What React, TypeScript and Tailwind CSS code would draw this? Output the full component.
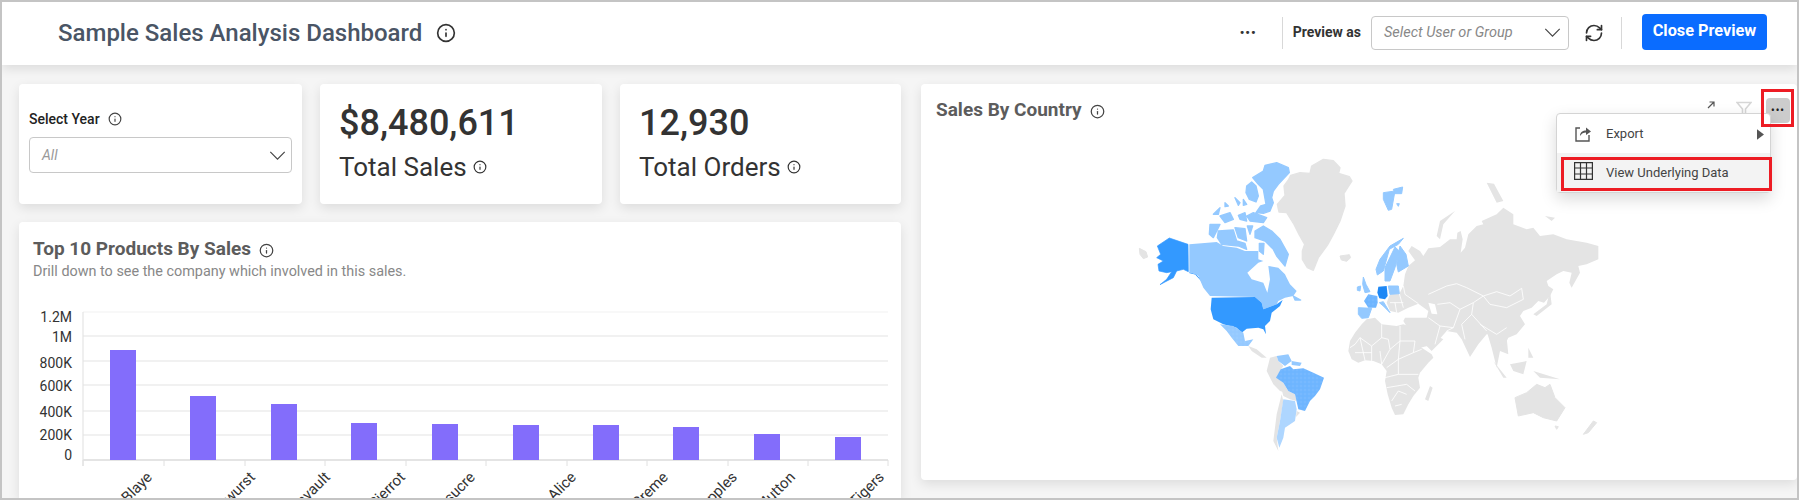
import { Info, RefreshCw } from "lucide-react";

const GRAY = "#e4e4e4";
const LIGHT = "#94c9ff";
const MID = "#6db4ff";
const BLUE = "#3399ff";

const GRID = [
  { y: 312, label: "1.2M", ly: 317 },
  { y: 336, label: "1M", ly: 337 },
  { y: 361, label: "800K", ly: 363 },
  { y: 385, label: "600K", ly: 386 },
  { y: 411, label: "400K", ly: 412 },
  { y: 435, label: "200K", ly: 435 },
  { y: 460, label: "0", ly: 455 },
];

const TICKS = [83, 164, 245, 325, 406, 486, 567, 647, 728, 808, 888];

const BARS = [
  { x: 110, top: 350, label: "Côte de Blaye", ex: 153, ey: 478 },
  { x: 190, top: 396, label: "Thüringer Rostbratwurst", ex: 256, ey: 478 },
  { x: 271, top: 404, label: "Raclette Courdavault", ex: 331, ey: 478 },
  { x: 351, top: 423, label: "Camembert Pierrot", ex: 406, ey: 478 },
  { x: 432, top: 424, label: "Tarte au sucre", ex: 476, ey: 478 },
  { x: 513, top: 425, label: "Gnocchi di nonna Alice", ex: 577, ey: 478 },
  { x: 593, top: 425, label: "Vanilla Creme", ex: 669, ey: 478 },
  { x: 673, top: 427, label: "Manjimup Dried Apples", ex: 738, ey: 478 },
  { x: 754, top: 434, label: "Alice Mutton", ex: 796, ey: 478 },
  { x: 835, top: 437, label: "Carnarvon Tigers", ex: 885, ey: 478 },
];

function Chevron({ className }: { className?: string }) {
  return (
    <svg viewBox="0 0 18 10" className={className} fill="none" stroke="#444" strokeWidth="1.3">
      <path d="M1 1 L9 9 L17 1" />
    </svg>
  );
}

function TopProductsChart() {
  return (
    <svg viewBox="19 290 882 210" width={882} height={210} className="block mt-[8px]">
      {GRID.map((g) => (
        <line key={g.y} x1={83} x2={888} y1={g.y} y2={g.y} stroke={g.y === 312 ? "#f2f2f2" : "#e4e4e4"} strokeWidth={g.y === 460 ? 2 : 1.2} />
      ))}
      {GRID.map((g) => (
        <text key={g.label} x={72} y={g.ly + 5} textAnchor="end" fontSize={14} fill="#333">
          {g.label}
        </text>
      ))}
      <line x1={83} x2={83} y1={312} y2={466} stroke="#e4e4e4" strokeWidth={1.2} />
      {TICKS.map((x) => (
        <line key={x} x1={x} x2={x} y1={460} y2={466} stroke="#e0e0e0" strokeWidth={1} />
      ))}
      {BARS.map((b) => (
        <rect key={b.x} x={b.x} y={b.top} width={26} height={460 - b.top} fill="#836dfb" />
      ))}
      {BARS.map((b) => (
        <text key={b.label} textAnchor="end" fontSize={15} fill="#333" transform={`translate(${b.ex} ${b.ey}) rotate(-45)`}>
          {b.label}
        </text>
      ))}
    </svg>
  );
}

function WorldMap() {
  return (
    <svg viewBox="1130 155 480 330" width={480} height={330} className="block" strokeLinejoin="round">
      <defs>
        <pattern id="dots" width="4" height="4" patternUnits="userSpaceOnUse">
          <circle cx="1" cy="1" r="0.45" fill="#cfe6ff" />
        </pattern>
      </defs>
      {/* north america, traced at 3x from (1130,155) */}
      <g transform="translate(1130 155) scale(0.33333)">
        <path fill={GRAY} stroke={GRAY} strokeWidth="4" d="M482,58 L510,50 L540,52 L545,30 L580,10 L610,14 L630,35 L626,52 L658,62 L666,75 L642,112 L645,150 L630,195 L610,235 L592,268 L565,305 L550,343 L532,335 L517,310 L517,285 L524,265 L507,235 L492,205 L470,170 L447,168 L442,145 L465,118 L462,90 L475,72 Z" />
        <path fill={GRAY} stroke={GRAY} strokeWidth="3" d="M630,300 L658,296 L662,305 L650,316 L634,312 Z M28,277 L48,287 L53,303 L40,308 L30,295 Z" />
        <path fill={BLUE} stroke={BLUE} strokeWidth="2" d="M118,246 L174,265 L175,347 L160,340 L140,345 L130,365 L105,378 L90,386 L110,370 L125,347 L110,350 L87,345 L84,325 L100,315 L80,305 L92,295 L82,270 Z" />
        <path fill="none" stroke={BLUE} strokeWidth="3" d="M178,350 L195,354 L215,375 L225,395" />
        <path fill={LIGHT} d="M178,265 L215,262 L260,258 L280,270 L320,275 L345,285 L385,285 L385,310 L400,315 L385,320 L352,350 L365,370 L400,380 L412,410 L420,370 L415,330 L445,335 L465,355 L470,365 L480,385 L500,405 L490,420 L465,425 L445,435 L440,445 L400,460 L395,440 L375,423 L240,420 L220,395 L205,360 L178,348 Z" />
        <path fill={LIGHT} stroke={LIGHT} strokeWidth="4" d="M490,420 L512,432 L495,432 Z M368,65 L400,45 L405,28 L440,20 L475,35 L478,50 L445,85 L430,105 L425,125 L430,140 L420,165 L400,172 L378,170 L392,150 L408,145 L400,100 L385,85 Z M350,90 L365,78 L378,90 L385,120 L378,138 L358,130 L348,110 Z M250,175 L270,155 L265,175 Z M270,180 L300,170 L310,190 L285,200 Z M285,140 L295,150 L285,152 Z M315,125 L330,140 L325,148 Z M340,130 L350,145 L340,148 Z M325,178 L345,170 L350,195 L330,190 Z M350,180 L370,170 L410,185 L400,200 L360,195 Z M240,205 L270,205 L250,245 L238,235 Z M265,225 L310,222 L320,255 L345,262 L350,280 L325,270 L275,265 L262,245 Z M315,215 L345,218 L350,255 L325,245 Z M352,210 L368,210 L360,235 Z M375,225 L400,210 L425,225 L450,250 L475,295 L465,330 L440,300 L430,280 L405,255 L375,245 Z M388,262 L402,262 L400,295 L388,285 Z" />
        <path fill={BLUE} d="M245,425 L375,423 L395,440 L400,460 L440,445 L458,432 L450,450 L425,470 L420,495 L405,510 L408,535 L400,520 L385,515 L350,518 L335,530 L320,515 L280,505 L250,490 L242,460 Z" />
      </g>
      {/* americas south and africa, oceania, traced at 3x from (1120,160) */}
      <g transform="translate(1120 160) scale(0.33333)">
        <path fill={LIGHT} d="M300,490 L340,495 L370,515 L375,540 L400,535 L385,555 L355,555 L335,530 L320,510 Z" />
        <path fill="url(#dots)" d="M300,490 L340,495 L370,515 L375,540 L400,535 L385,555 L355,555 L335,530 L320,510 Z" />
        <path fill={GRAY} d="M385,555 L410,565 L440,590 L425,590 L395,570 Z" />
        <path fill={GRAY} d="M450,590 L470,585 L475,600 L490,615 L480,630 L470,650 L490,665 L510,700 L480,690 L460,670 L440,630 Z" />
        <path fill={GRAY} d="M480,665 L505,690 L525,700 L530,720 L510,715 L490,705 Z M485,700 L490,720 L480,780 L470,830 L475,870 L460,840 L470,760 Z M530,750 L540,755 L528,768 Z" />
        <path fill={LIGHT} d="M470,585 L505,580 L515,600 L495,615 L475,600 Z M515,600 L545,605 L540,615 L515,612 Z" />
        <path fill={MID} d="M482,625 L510,615 L520,625 L550,622 L580,635 L612,650 L600,685 L585,705 L570,720 L555,750 L535,745 L525,700 L505,690 L490,665 L468,650 Z" />
        <path fill="url(#dots)" d="M482,625 L510,615 L520,625 L550,622 L580,635 L612,650 L600,685 L585,705 L570,720 L555,750 L535,745 L525,700 L505,690 L490,665 L468,650 Z" />
        <path fill="#aed6ff" d="M490,715 L525,720 L530,745 L525,780 L495,800 L490,830 L478,860 L470,830 L480,780 Z" />
        <path fill={GRAY} d="M740,475 L765,470 L785,490 L830,495 L850,490 L880,500 L890,530 L905,560 L935,580 L940,590 L925,605 L900,635 L895,650 L900,680 L880,705 L865,730 L850,760 L825,762 L815,740 L803,700 L795,660 L800,630 L785,610 L760,600 L735,598 L715,605 L695,595 L685,570 L690,540 L705,515 L725,490 Z" />
        <path fill="none" stroke="#fff" strokeWidth="2.5" d="M785,490 L785,530 L755,555 L720,530 L705,550 L690,560 M785,530 L805,535 L810,565 L785,610 M840,495 L840,540 L810,565 M840,540 L885,540 L880,575 L905,565 M840,540 L835,595 L800,620 M835,595 L880,575 M835,595 L835,640 L795,650 M835,640 L895,640 M800,680 L860,670 L885,690 M815,720 L835,690 L860,700 M845,730 L825,735 M755,555 L755,600 M720,530 L735,598 M705,575 L755,575 M780,570 L785,610" />
        <path fill={GRAY} d="M883,490 L920,470 L940,520 L970,535 L935,570 L910,545 Z M930,675 L938,680 L925,720 L915,715 Z M1100,510 L1160,530 L1165,580 L1140,570 L1130,620 L1115,560 Z M1120,600 L1160,650 L1150,650 Z M1170,610 L1220,600 L1210,640 L1180,630 Z M1240,630 L1320,655 L1260,650 Z M1225,560 L1240,590 L1225,590 Z" />
        <path fill={GRAY} stroke={GRAY} strokeWidth="3" d="M1185,710 L1220,695 L1250,670 L1275,680 L1290,670 L1305,710 L1335,740 L1310,780 L1270,770 L1240,755 L1195,765 Z M1305,795 L1315,797 L1310,805 Z M1420,780 L1430,785 L1405,815 L1390,820 Z" />
      </g>
      {/* eurasia, traced at 3x from (1340,170) */}
      <g transform="translate(1340 170) scale(0.33333)">
        <path fill={GRAY} d="M195,310 L205,285 L225,268 L205,240 L215,225 L240,240 L250,255 L265,232 L300,228 L330,205 L350,205 L352,185 L362,180 L368,205 L362,245 L375,230 L385,190 L410,165 L430,160 L425,150 L470,130 L490,110 L520,130 L520,160 L560,175 L580,170 L600,195 L640,190 L680,205 L740,215 L775,225 L775,265 L740,280 L715,285 L720,305 L695,350 L688,335 L695,305 L670,300 L650,310 L620,330 L625,345 L640,355 L630,375 L612,395 L595,390 L575,410 L550,420 L540,435 L555,460 L530,490 L505,500 L490,530 L465,490 L440,490 L415,520 L390,558 L365,505 L350,485 L320,480 L285,520 L240,530 L215,490 L190,450 L195,440 L260,440 L265,420 L235,398 L205,410 L175,425 L150,420 L140,395 L150,370 L178,368 L190,345 Z" />
        <path fill="#fff" d="M265,395 L285,400 L292,430 L275,428 Z" />
        <path fill="none" stroke="#fff" strokeWidth="2.5" d="M265,370 L320,345 L350,338 L380,350 L430,375 M430,375 L470,362 L510,375 L545,352 L550,385 L500,410 L450,400 L430,375 M292,400 L330,395 L360,415 L400,395 L430,375 M360,415 L340,470 L320,480 M400,395 L395,430 L365,460 L375,505 M395,430 L440,480 M340,470 L300,465 L265,440 M300,465 L285,520 M178,368 L190,410 M190,345 L195,370 L235,398 M150,395 L190,395 M165,395 L170,425 M420,460 L470,490 L500,470" />
        <path fill={GRAY} d="M440,35 L462,38 L490,90 L470,95 Z M615,135 L645,140 L635,150 Z M715,290 L690,350 L700,320 Z M630,360 L635,400 L590,435 L580,430 L620,400 Z M290,195 L300,150 L345,120 L310,160 L300,205 Z" />
        <path fill={LIGHT} stroke={LIGHT} strokeWidth="3" d="M130,65 L165,60 L155,115 L145,118 L130,85 Z M160,55 L188,48 L185,68 L165,68 Z M170,98 L178,98 L175,106 Z" />
        <path fill={LIGHT} stroke={LIGHT} strokeWidth="3" d="M190,202 L150,225 L120,265 L108,295 L112,312 L130,300 L148,235 L175,220 Z M165,228 L178,240 L165,290 L150,330 L135,330 L135,290 Z M180,225 L198,250 L205,285 L175,303 L170,280 Z M70,318 L78,340 L90,362 L75,365 L68,340 Z M52,348 L62,345 L60,360 L52,358 Z M55,410 L95,412 L85,440 L65,442 L55,430 Z M145,345 L175,345 L178,368 L150,370 Z M118,395 L130,392 L150,425 L130,405 Z" />
        <path fill={MID} d="M85,370 L112,375 L113,395 L108,410 L85,410 L72,390 Z" />
        <path fill="url(#dots)" d="M85,370 L112,375 L113,395 L108,410 L85,410 L72,390 Z" />
        <path fill="#1e88f5" d="M115,347 L140,345 L143,375 L135,385 L118,382 L112,365 Z" />
      </g>
    </svg>
  );
}

export default function App() {
  return (
    <div className="w-[1799px] h-[500px] overflow-hidden bg-[#f5f5f5] border-2 border-[#c4c4c4] font-['Roboto',sans-serif] flex flex-col">
      {/* Header */}
      <div className="h-[63px] shrink-0 bg-white shadow-[0_4px_10px_rgba(0,0,0,0.1)] flex items-center pl-[56px] pr-[30px] pb-[2px]">
        <h1 className="text-[24px] font-medium text-[#4a5565]">Sample Sales Analysis Dashboard</h1>
        <Info className="w-[20px] h-[20px] ml-[14px] text-[#333]" />
        <div className="flex-1" />
        <span className="text-[#333] text-[13px] font-bold tracking-[1px] leading-none">•••</span>
        <div className="w-px h-[32px] bg-[#d8d8d8] ml-[25px]" />
        <span className="ml-[10px] text-[14px] font-bold text-[#333]">Preview as</span>
        <div className="ml-[10px] w-[198px] h-[34px] border border-[#c8c8c8] rounded-[4px] flex items-center justify-between pl-[12px] pr-[7px]">
          <span className="text-[14.5px] italic text-[#888]">Select User or Group</span>
          <Chevron className="w-[17px] h-[9px]" />
        </div>
        <RefreshCw className="ml-[15px] w-[20px] h-[20px] text-[#333]" />
        <div className="w-px h-[32px] bg-[#d8d8d8] ml-[17px]" />
        <button className="ml-[20px] w-[125px] h-[36px] rounded-[4px] bg-[#0a6cff] text-white text-[16.3px] font-bold -mt-[2px]">Close Preview</button>
      </div>

      <div className="flex-1 flex gap-[20px] pl-[17px] pt-[19px] min-h-0">
        {/* Left column */}
        <div className="w-[882px] shrink-0 flex flex-col gap-[18px]">
          <div className="grid grid-cols-[283px_282px_1fr] gap-[18px] h-[120px] shrink-0">
            <div className="bg-white rounded-[4px] shadow-[0_4px_12px_rgba(0,0,0,0.1)] px-[10px] pt-[25px]">
              <div className="flex items-center text-[14px] font-medium text-[#222] leading-[20px]">
                Select Year
                <Info className="w-[14px] h-[14px] ml-[8px] text-[#444]" />
              </div>
              <div className="mt-[8px] h-[36px] border border-[#c8c8c8] rounded-[4px] flex items-center justify-between pl-[12px] pr-[5px]">
                <span className="text-[14px] italic text-[#999]">All</span>
                <Chevron className="w-[17px] h-[9px]" />
              </div>
            </div>
            <div className="bg-white rounded-[4px] shadow-[0_4px_12px_rgba(0,0,0,0.1)] pl-[19px] pt-[18px]">
              <div className="text-[36px] font-medium text-[#333] leading-[42px]">$8,480,611</div>
              <div className="mt-[7px] flex items-center text-[26px] text-[#333] leading-[32px]">
                Total Sales
                <Info className="w-[14px] h-[14px] ml-[6px]" />
              </div>
            </div>
            <div className="bg-white rounded-[4px] shadow-[0_4px_12px_rgba(0,0,0,0.1)] pl-[19px] pt-[18px]">
              <div className="text-[36px] font-medium text-[#333] leading-[42px]">12,930</div>
              <div className="mt-[7px] flex items-center text-[26px] text-[#333] leading-[32px]">
                Total Orders
                <Info className="w-[14px] h-[14px] ml-[6px]" />
              </div>
            </div>
          </div>

          <div className="flex-1 min-h-0 overflow-hidden bg-white rounded-t-[4px] shadow-[0_4px_12px_rgba(0,0,0,0.1)] pt-[15px]">
            <div className="pl-[14px] flex items-center text-[19px] font-bold text-[#5c5c5c] leading-[24px]">
              Top 10 Products By Sales
              <Info className="w-[15px] h-[15px] ml-[8px] mt-[3px] text-[#444]" />
            </div>
            <div className="pl-[14px] text-[14.4px] text-[#888] leading-[20px] mt-[1px]">Drill down to see the company which involved in this sales.</div>
            <TopProductsChart />
          </div>
        </div>

        {/* Sales by country */}
        <div className="relative flex-1 h-[396px] bg-white rounded-[4px] shadow-[0_4px_12px_rgba(0,0,0,0.1)]">
          <div className="flex items-start justify-between pl-[15px] pr-[7px] pt-[14px]">
            <div className="flex items-center text-[19px] font-bold text-[#5c5c5c] leading-[24px]">
              Sales By Country
              <Info className="w-[15px] h-[15px] ml-[8px] mt-[3px] text-[#444]" />
            </div>
            <div className="flex items-start">
              <svg viewBox="0 0 8 8" className="w-[8px] h-[8px] mt-[3px]" fill="none" stroke="#555" strokeWidth="1.2">
                <path d="M1 7 L6.5 1.5 M2.5 1 H7 V5.5" />
              </svg>
              <svg viewBox="0 0 16 14" className="ml-[21px] mt-[3px] w-[16px] h-[14px]" fill="none" stroke="#d6d6d6" strokeWidth="1.6">
                <path d="M1 1.5 H15 L9.5 8 V13 H6.5 V8 Z" />
              </svg>
              <div className="ml-[14px] w-[24px] h-[25px] rounded-[4px] bg-[#cccccc] flex items-center justify-center text-[10px] font-bold text-[#222] tracking-[1px]">•••</div>
            </div>
          </div>
          <div className="ml-[209px] mt-[33px]">
            <WorldMap />
          </div>

          {/* Menu */}
          <div className="absolute left-[635px] top-[29px] w-[215px] h-[80px] bg-white border border-[#d4d4d4] rounded-[4px] shadow-[0_6px_16px_rgba(0,0,0,0.15)] text-[13px] text-[#444]">
            <div className="h-[39px] flex items-center pl-[17px] pr-[6px] pt-[1px]">
              <svg viewBox="0 0 18 18" className="w-[18px] h-[18px]" fill="none" stroke="#555" strokeWidth="1.4">
                <path d="M6 3 H2 V16 H15 V10" />
                <path d="M6 11 C6 7 9 5.5 12 5.5 V2.5 L17 6.5 L12 10 V7.5 C9.5 7.5 7.5 8.5 6 11 Z" fill="#555" stroke="none" />
              </svg>
              <span className="ml-[14px]">Export</span>
              <svg viewBox="0 0 8 12" className="ml-auto w-[7px] h-[11px]" fill="#555">
                <path d="M0 0 L8 6 L0 12 Z" />
              </svg>
            </div>
            <div className="h-[39px] bg-[#f3f3f3] flex items-center pl-[17px]">
              <svg viewBox="0 0 19 18" className="w-[19px] h-[18px] -mt-[4px]" fill="none" stroke="#333" strokeWidth="1.2">
                <path d="M0.6 0.6 H18.4 V17.4 H0.6 Z M0.6 6 H18.4 M0.6 12 H18.4 M6.5 0.6 V17.4 M12.5 0.6 V17.4" />
              </svg>
              <span className="ml-[13px]">View Underlying Data</span>
            </div>
          </div>

          {/* Callout boxes */}
          <div className="absolute left-[640px] top-[73px] w-[211px] h-[34px] border-[3px] border-[#ed1c24]" />
          <div className="absolute left-[840px] top-[5px] w-[33px] h-[38px] border-[3px] border-[#ed1c24]" />
        </div>
      </div>
    </div>
  );
}
